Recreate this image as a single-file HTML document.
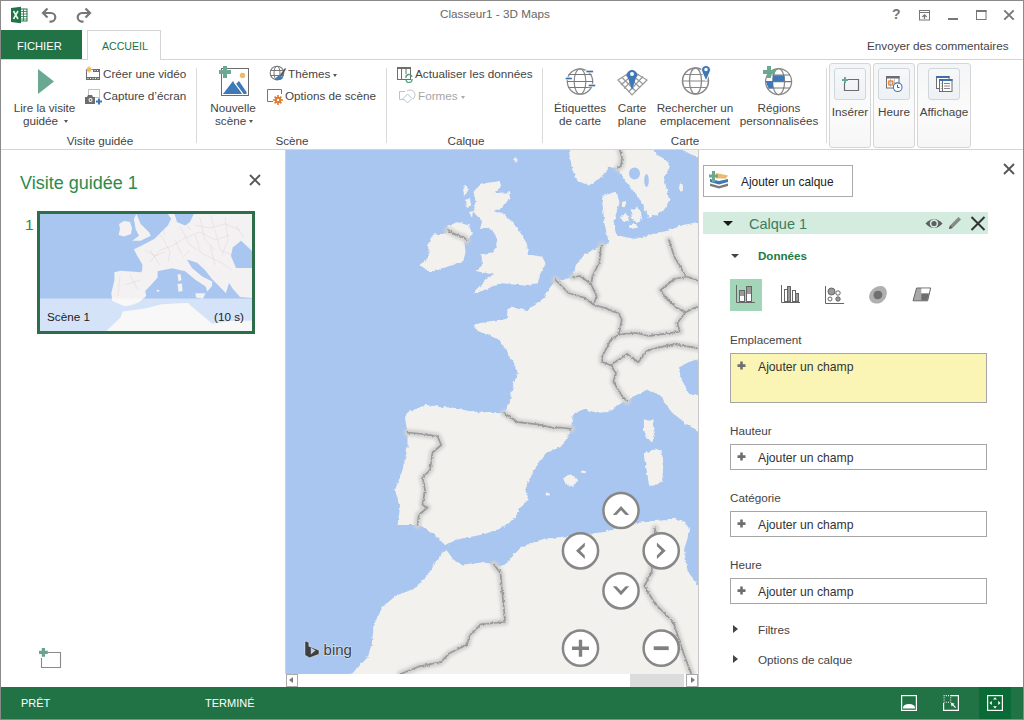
<!DOCTYPE html>
<html><head><meta charset="utf-8">
<style>
*{box-sizing:border-box;margin:0;padding:0}
html,body{width:1024px;height:720px;overflow:hidden;background:#fff}
body{font-family:"Liberation Sans",sans-serif;color:#444;position:relative}
.a{position:absolute;white-space:nowrap}
.t{font-size:11.7px;color:#444;line-height:14px}
.sep{position:absolute;width:1px;background:#dadada}
.cg{border:1px solid #d6d6d6;border-radius:3px;background:linear-gradient(#f4f5f6,#fbfbfb 60%,#f6f6f6)}
.ib{border:1px solid #cfd6dc;border-radius:3px;background:linear-gradient(#f6f8fa,#eef1f4)}
.grp{position:absolute;font-size:11.7px;color:#444;line-height:14px;text-align:center}
</style></head><body>
<!-- window border -->
<div class="a" style="left:0;top:0;width:1024px;height:720px;border:1px solid #8a8a8a;z-index:50;pointer-events:none"></div>

<!-- title bar -->
<div class="a t" style="left:440px;top:7px;color:#666">Classeur1 - 3D Maps</div>

<!-- tabs -->
<div class="a" style="left:1px;top:30px;width:81px;height:30px;background:#217346"></div>
<div class="a" style="left:17px;top:39px;font-size:11.2px;color:#fff;line-height:14px">FICHIER</div>
<div class="a" style="left:87px;top:30px;width:74px;height:30px;border:1px solid #d4d4d4;border-bottom:none;background:#fff;z-index:2"></div>
<div class="a" style="left:102px;top:39px;font-size:10.6px;color:#217346;line-height:14px;z-index:3">ACCUEIL</div>
<div class="a t" style="left:867px;top:39px;color:#444">Envoyer des commentaires</div>

<!-- ribbon -->
<div class="a" style="left:1px;top:59px;width:1022px;height:1px;background:#d4d4d4"></div>
<div class="a" style="left:1px;top:149px;width:1022px;height:1px;background:#d4d4d4"></div>

<!-- title bar icons -->
<svg class="a" style="left:10px;top:6px" width="20" height="18" viewBox="0 0 20 18">
 <path d="M1 2 L11 0.8 L11 17.2 L1 16 Z" fill="#1f7346"/>
 <rect x="10.5" y="3" width="6.5" height="12" fill="#fff" stroke="#1f7346" stroke-width="1"/>
 <path d="M11 5.5h6M11 8h6M11 10.5h6M11 13h6M13.5 3v12" stroke="#1f7346" stroke-width="0.8"/>
 <path d="M3.5 5 L8 13 M8 5 L3.5 13" stroke="#e8f3ec" stroke-width="1.6"/>
</svg>
<svg class="a" style="left:41px;top:7px" width="18" height="16" viewBox="0 0 18 16">
 <path d="M6.5 1.5 L2 6 L6.5 10.5" fill="none" stroke="#777" stroke-width="2.2"/>
 <path d="M2.5 6 H10 A4.3 4.3 0 0 1 10 14.6 H8.5" fill="none" stroke="#777" stroke-width="2.2"/>
</svg>
<svg class="a" style="left:74px;top:7px" width="18" height="16" viewBox="0 0 18 16">
 <path d="M11.5 1.5 L16 6 L11.5 10.5" fill="none" stroke="#777" stroke-width="2.2"/>
 <path d="M15.5 6 H8 A4.3 4.3 0 0 0 8 14.6 H9.5" fill="none" stroke="#777" stroke-width="2.2"/>
</svg>
<div class="a" style="left:892px;top:6px;font-size:14px;font-weight:bold;color:#777;line-height:16px">?</div>
<svg class="a" style="left:919px;top:10px" width="12" height="11" viewBox="0 0 12 11">
 <rect x="0.5" y="0.5" width="10" height="9.5" fill="none" stroke="#777"/>
 <path d="M0.5 2.5h10" stroke="#777" stroke-width="1"/>
 <path d="M5.5 9V5M3.3 7L5.5 4.8L7.7 7" fill="none" stroke="#777" stroke-width="1.2"/>
</svg>
<div class="a" style="left:948px;top:18px;width:10px;height:2px;background:#777"></div>
<svg class="a" style="left:976px;top:10px" width="11" height="10" viewBox="0 0 11 10">
 <rect x="0.5" y="0.5" width="9.5" height="9" fill="none" stroke="#777"/>
 <rect x="0" y="0" width="10.5" height="2" fill="#777"/>
</svg>
<svg class="a" style="left:1003px;top:9px" width="12" height="12" viewBox="0 0 12 12">
 <path d="M1.3 1.3L10.7 10.7M10.7 1.3L1.3 10.7" stroke="#777" stroke-width="1.9"/>
</svg>

<!-- ===== Visite guidée group ===== -->
<svg class="a" style="left:37px;top:69px" width="18" height="26" viewBox="0 0 18 26">
 <path d="M1 0 L17 12.5 L1 25 Z" fill="#6aa892"/>
</svg>
<div class="a t" style="left:13px;top:101px;width:63px;text-align:center">Lire la visite</div>
<div class="a t" style="left:23px;top:114px">guidée</div>
<div class="a" style="left:64px;top:120px;width:0;height:0;border-left:2.5px solid transparent;border-right:2.5px solid transparent;border-top:3px solid #555"></div>

<svg class="a" style="left:85px;top:66px" width="16" height="15" viewBox="0 0 16 15">
 <rect x="1.5" y="3.5" width="13" height="10" fill="#fff" stroke="#6d6d6d" stroke-width="1"/>
 <rect x="1" y="11" width="14" height="3" fill="#6d6d6d"/>
 <rect x="8" y="3" width="7" height="3" fill="#6d6d6d"/>
 <path d="M2.5 12.5h1M5 12.5h1M7.5 12.5h1M10 12.5h1M12.5 12.5h1M9.5 4.5h1M12 4.5h1" stroke="#fff" stroke-width="1"/>
 <circle cx="4" cy="3.5" r="2.2" fill="#f0b860"/>
 <path d="M4 0v7M0.5 3.5h7M1.5 1l5 5M6.5 1l-5 5" stroke="#f0b860" stroke-width="0.7"/>
</svg>
<div class="a t" style="left:103px;top:67px">Créer une vidéo</div>
<svg class="a" style="left:84px;top:89px" width="18" height="16" viewBox="0 0 18 16">
 <rect x="4.5" y="0.5" width="11" height="8" fill="none" stroke="#888" stroke-width="1" stroke-dasharray="1 1"/>
 <path d="M1 8h2l1-2h4l1 2h2v7H1z" fill="#6d6d6d"/>
 <circle cx="6.5" cy="11" r="2" fill="#fff"/><circle cx="6.5" cy="11" r="1" fill="#6d6d6d"/>
 <path d="M15 9.5v6M12 12.5h6" stroke="#3c78b5" stroke-width="2"/>
</svg>
<div class="a t" style="left:103px;top:89px">Capture d’écran</div>
<div class="a grp" style="left:40px;top:134px;width:120px">Visite guidée</div>
<div class="sep" style="left:196px;top:68px;height:75px"></div>

<!-- ===== Scène group ===== -->
<svg class="a" style="left:218px;top:65px" width="32" height="32" viewBox="0 0 32 32">
 <rect x="3.5" y="3.5" width="27" height="27" fill="#fff" stroke="#6d6d6d" stroke-width="1"/>
 <path d="M5 29 L15 16 L22 25 L24 29 Z" fill="#3e78b8"/>
 <path d="M18 19 L21 16 L28.5 27 L28.5 29 L25 29 Z" fill="#3e78b8"/>
 <path d="M16 17 L25 29" stroke="#fff" stroke-width="1.2"/>
 <circle cx="24.5" cy="10.5" r="2.7" fill="#e9bb6f"/>
 <path d="M7 1 v12 M1 7 h12" stroke="#6aa892" stroke-width="4"/>
</svg>
<div class="a t" style="left:209px;top:101px;width:48px;text-align:center">Nouvelle</div>
<div class="a t" style="left:215px;top:114px">scène</div>
<div class="a" style="left:249px;top:120px;width:0;height:0;border-left:2.5px solid transparent;border-right:2.5px solid transparent;border-top:3px solid #555"></div>

<svg class="a" style="left:269px;top:65px" width="17" height="17" viewBox="0 0 17 17">
 <circle cx="8" cy="8" r="6.8" fill="#fff" stroke="#777" stroke-width="1.1"/>
 <ellipse cx="8" cy="8" rx="3" ry="6.8" fill="none" stroke="#777" stroke-width="1"/>
 <path d="M1.5 5.5h13M1.5 10.5h13" stroke="#777" stroke-width="1"/>
 <path d="M6 15 Q8 10 12 11 L14 13 Q12 16 6 15Z" fill="#3e78b8"/>
 <path d="M11 10 L16 3 L17 4 L13 11Z" fill="#555"/>
</svg>
<div class="a t" style="left:288px;top:67px">Thèmes</div>
<div class="a" style="left:333px;top:74px;width:0;height:0;border-left:2.5px solid transparent;border-right:2.5px solid transparent;border-top:3px solid #555"></div>
<svg class="a" style="left:267px;top:89px" width="17" height="16" viewBox="0 0 17 16">
 <path d="M6 12.5H0.5V0.5H14.5V5" fill="none" stroke="#777" stroke-width="1"/>
 <circle cx="11" cy="11" r="3.2" fill="#e07a2c"/>
 <path d="M11 6v10M6 11h10M7.6 7.6l6.8 6.8M14.4 7.6l-6.8 6.8" stroke="#e07a2c" stroke-width="1.6"/>
 <circle cx="11" cy="11" r="1.2" fill="#fff"/>
</svg>
<div class="a t" style="left:285px;top:89px">Options de scène</div>
<div class="a grp" style="left:252px;top:134px;width:80px">Scène</div>
<div class="sep" style="left:386px;top:68px;height:75px"></div>

<!-- ===== Calque group ===== -->
<svg class="a" style="left:397px;top:67px" width="17" height="16" viewBox="0 0 17 16">
 <rect x="0.5" y="0.5" width="13" height="12" fill="#fff" stroke="#6d6d6d" stroke-width="1"/>
 <rect x="0" y="0" width="14" height="2" fill="#6d6d6d"/>
 <path d="M4.5 2v10M9 2v5" stroke="#6d6d6d" stroke-width="1"/>
 <path d="M9 11 A3 3 0 0 1 15 10 M15 12 A3 3 0 0 1 9 13" fill="none" stroke="#4ea27a" stroke-width="1.3"/>
</svg>
<div class="a t" style="left:415px;top:67px">Actualiser les données</div>
<svg class="a" style="left:399px;top:88px" width="17" height="16" viewBox="0 0 17 16">
 <path d="M5 11.5H0.5V3.5H6" fill="none" stroke="#b9c4cc" stroke-width="1"/>
 <path d="M8 3 A5 5 0 0 1 14 11" fill="none" stroke="#b9c4cc" stroke-width="1"/>
 <path d="M8.5 6 L13 10.5 L8.5 15 L4 10.5Z" fill="none" stroke="#b9c4cc" stroke-width="1"/>
</svg>
<div class="a t" style="left:418px;top:89px;color:#a6a6a6">Formes</div>
<div class="a" style="left:461px;top:96px;width:0;height:0;border-left:2.5px solid transparent;border-right:2.5px solid transparent;border-top:3px solid #aaa"></div>
<div class="a grp" style="left:426px;top:134px;width:80px">Calque</div>
<div class="sep" style="left:542px;top:68px;height:75px"></div>

<!-- ===== Carte group ===== -->
<svg class="a" style="left:564px;top:66px" width="34" height="30" viewBox="0 0 34 30">
 <circle cx="16" cy="15.5" r="12.7" fill="#fff" stroke="#8a8a8a" stroke-width="1.3"/>
 <ellipse cx="16" cy="15.5" rx="5.8" ry="12.7" fill="none" stroke="#8a8a8a" stroke-width="1.2"/>
 <path d="M4.5 8.5h23M3 15.5h26M4.5 21.5h23" stroke="#777" stroke-width="1.2"/>
 <rect x="1.2" y="11.2" width="7" height="2.6" fill="#3e6fa8" stroke="#fff" stroke-width="0.8"/>
 <rect x="22" y="4.2" width="7.5" height="2.6" fill="#3e6fa8" stroke="#fff" stroke-width="0.8"/>
 <rect x="24.2" y="18.2" width="7.5" height="2.6" fill="#3e6fa8" stroke="#fff" stroke-width="0.8"/>
</svg>
<div class="a t" style="left:551px;top:101px;width:58px;text-align:center">Étiquettes</div>
<div class="a t" style="left:551px;top:114px;width:58px;text-align:center">de carte</div>

<svg class="a" style="left:617px;top:66px" width="32" height="30" viewBox="0 0 32 30">
 <path d="M1 14 L15 5 L30 14 L15 29 Z" fill="#fff" stroke="#999" stroke-width="1.2"/>
 <path d="M5 11.5 L19 25.5 M9 9 L23 21.5 M12 6.8 L26 18 M26 10.5 L11.5 26 M21.5 8 L7 22.5 M18 6.5 L4 19" stroke="#999" stroke-width="1.2"/>
 <path d="M15 24 L11 12 A5 5 0 1 1 19 12 Z" fill="#3e78b8"/>
 <circle cx="15" cy="8" r="2" fill="#fff"/>
</svg>
<div class="a t" style="left:612px;top:101px;width:40px;text-align:center">Carte</div>
<div class="a t" style="left:612px;top:114px;width:40px;text-align:center">plane</div>

<svg class="a" style="left:681px;top:64px" width="32" height="32" viewBox="0 0 32 32">
 <circle cx="14.5" cy="17" r="13" fill="#fff" stroke="#888" stroke-width="1.5"/>
 <ellipse cx="14.5" cy="17" rx="6" ry="13" fill="none" stroke="#888" stroke-width="1.3"/>
 <path d="M1.5 17h26M3.5 10.5h22M3.5 23.5h22" stroke="#888" stroke-width="1.2"/>
 <path d="M25 17 L21 8 A4.5 4.5 0 1 1 29 8 Z" fill="#3e78b8" stroke="#fff" stroke-width="1"/>
 <circle cx="25" cy="5.5" r="1.7" fill="#fff"/>
</svg>
<div class="a t" style="left:654px;top:101px;width:82px;text-align:center">Rechercher un</div>
<div class="a t" style="left:654px;top:114px;width:82px;text-align:center">emplacement</div>

<svg class="a" style="left:762px;top:64px" width="34" height="32" viewBox="0 0 34 32">
 <circle cx="16.6" cy="17.6" r="13" fill="#fff" stroke="#8a8a8a" stroke-width="1.3"/>
 <ellipse cx="16.6" cy="17.6" rx="6" ry="13" fill="none" stroke="#8a8a8a" stroke-width="1.2"/>
 <path d="M5 11h23M3.6 17.6h26M5 24h23" stroke="#777" stroke-width="1.2"/>
 <path d="M11 11.3 H22.4 V17.1 H11 Z" fill="#3e78b8"/>
 <path d="M4 17 H11 V24.5 H7 Q4.5 21 4 17 Z" fill="#3e78b8"/>
 <path d="M7 2 v12 M1 8 h12" stroke="#6aa892" stroke-width="4"/>
</svg>
<div class="a t" style="left:738px;top:101px;width:82px;text-align:center">Régions</div>
<div class="a t" style="left:738px;top:114px;width:82px;text-align:center">personnalisées</div>
<div class="a grp" style="left:645px;top:134px;width:80px">Carte</div>
<div class="sep" style="left:826px;top:68px;height:75px"></div>

<!-- ===== collapsed groups ===== -->
<div class="a cg" style="left:829px;top:63px;width:42px;height:85px"></div>
<div class="a ib" style="left:834px;top:68px;width:32px;height:32px"></div>
<svg class="a" style="left:840px;top:74px" width="22" height="20" viewBox="0 0 22 20">
 <path d="M7 5.5 H18.5 V16.5 H4.5 V9" fill="none" stroke="#6d6d6d" stroke-width="1.2"/>
 <path d="M5 3v6M2 6h6" stroke="#6aa892" stroke-width="2"/>
</svg>
<div class="a t" style="left:829px;top:105px;width:42px;text-align:center">Insérer</div>

<div class="a cg" style="left:873px;top:63px;width:42px;height:85px"></div>
<div class="a ib" style="left:878px;top:68px;width:32px;height:32px"></div>
<svg class="a" style="left:884px;top:74px" width="22" height="22" viewBox="0 0 22 22">
 <rect x="2.5" y="2.5" width="12.5" height="11.5" fill="#fff" stroke="#6d6d6d"/>
 <rect x="2" y="2" width="13.5" height="2.5" fill="#6d6d6d"/>
 <path d="M6.5 4.5v9M10.5 4.5v9M2.5 9h12.5" stroke="#bbb" stroke-width="0.8"/>
 <rect x="4.8" y="7" width="4" height="4" fill="none" stroke="#e07a2c" stroke-width="1.2"/>
 <circle cx="13.7" cy="13.2" r="4.3" fill="#fff" stroke="#3e78b8" stroke-width="1.1"/>
 <path d="M13.5 10.8v2.7h2" fill="none" stroke="#555" stroke-width="1"/>
</svg>
<div class="a t" style="left:873px;top:105px;width:42px;text-align:center">Heure</div>

<div class="a cg" style="left:917px;top:63px;width:54px;height:85px"></div>
<div class="a ib" style="left:928px;top:68px;width:32px;height:32px"></div>
<svg class="a" style="left:934px;top:74px" width="22" height="22" viewBox="0 0 22 22">
 <rect x="2.5" y="2.5" width="12.5" height="12" fill="#fff" stroke="#6d6d6d"/>
 <rect x="2" y="2" width="13.5" height="2" fill="#3e6fa8"/>
 <rect x="5.5" y="5.5" width="12.5" height="12" fill="#fff" stroke="#6d6d6d"/>
 <rect x="5" y="5" width="13.5" height="2" fill="#3e6fa8"/>
 <path d="M8.5 7v10" stroke="#6d6d6d"/>
 <path d="M6.8 9.5h0.8M6.8 12h0.8M6.8 14.5h0.8" stroke="#888"/>
 <path d="M10 9.5h6M10 12h6M10 14.5h6" stroke="#888" stroke-width="1"/>
</svg>
<div class="a t" style="left:917px;top:105px;width:54px;text-align:center">Affichage</div>

<!-- status bar -->
<div class="a" style="left:1px;top:687px;width:1022px;height:32px;background:#217346"></div>
<div class="a" style="left:21px;top:696px;font-size:11px;color:#fff;line-height:14px">PRÊT</div>
<div class="a" style="left:205px;top:696px;font-size:11px;color:#fff;line-height:14px">TERMINÉ</div>
<div class="a" style="left:979px;top:687px;width:32px;height:32px;background:#0b6b37"></div>

<!-- map -->
<div class="a" style="left:285px;top:150px;width:413px;height:524px;overflow:hidden;background:#a9c6f0">
<svg width="413" height="524" viewBox="285 150 413 524" style="position:absolute;left:0;top:0">
 <defs>
  <filter id="bl" x="-5%" y="-5%" width="110%" height="110%"><feGaussianBlur stdDeviation="0.6"/></filter>
  <filter id="roughb" x="-5%" y="-5%" width="110%" height="110%"><feTurbulence type="fractalNoise" baseFrequency="0.35" numOctaves="2" seed="7" result="n"/><feDisplacementMap in="SourceGraphic" in2="n" scale="3" xChannelSelector="R" yChannelSelector="G" result="d"/><feGaussianBlur in="d" stdDeviation="0.55"/></filter>
  <filter id="rough" x="-5%" y="-5%" width="110%" height="110%"><feTurbulence type="fractalNoise" baseFrequency="0.25" numOctaves="2" seed="3" result="n"/><feDisplacementMap in="SourceGraphic" in2="n" scale="3.5" xChannelSelector="R" yChannelSelector="G" result="d"/><feGaussianBlur in="d" stdDeviation="0.6"/></filter>
  <filter id="bl2" x="-5%" y="-5%" width="110%" height="110%"><feGaussianBlur stdDeviation="1.6"/></filter>
 </defs>
 <g fill="#f2f1ee" filter="url(#rough)">
  <!-- Europe mainland -->
  <path d="M710 221 L699 222 L683 225 L669 230.6 L655.6 233.3 L634.7 238.9 L620.8 236 L616.7 236 L613.9 225 L615.3 216.7 L619.4 202.8 L616.7 191.7 L602.8 195.8 L602 199 L604.4 223.3 L608.9 243.3 L602.2 245.6 L584.4 254.4 L575.6 265.6 L573.3 276.7 L553.3 283.3 L548.9 288.9 L544.4 297.8 L531.1 306.7 L526.7 311.1 L511.1 306.7 L507.8 308.9 L506.7 318.9 L491.1 321.1 L473.3 324.4 L477.8 331.1 L497.8 338.9 L506.7 351.1 L513.3 362.2 L517.8 373.3 L513.3 384.4 L510 400 L504.4 413.3 L480 412.5 L447.5 407.5 L425 405 L407.5 412.5 L405 417.5 L407.5 432.5 L407.5 447.5 L402.5 470 L395 490 L400 507.5 L397.5 525 L420 525 L435 535 L445 545 L455 540 L480 535 L500 529 L515 518 L520 508 L529 499 L525 490 L527.5 482.5 L536 467 L547 452.5 L560 447.5 L565 441.7 L571 429 L573 414 L584 409 L598 413 L608 412 L620 404 L630 398 L647 390 L660.6 395.6 L671.7 412.2 L685.6 423.3 L710 440 L710 392 L699 395.6 L688.3 392.8 L681.4 378.9 L678.6 367.8 L688.3 362.2 L710 355 Z"/>
  <!-- Scandinavia -->
  <path d="M568 140 L568.9 150 L570 158.9 L573.3 172.2 L577.8 181.1 L588.9 185.6 L602.2 176.7 L608.3 166.7 L616.7 168 L618 168 L620.8 175 L629.2 186 L637.5 195.8 L643 205.6 L648.6 216.7 L655.6 215.3 L665.3 208.3 L669.4 200 L666.7 188.9 L663.9 177.8 L669.4 168 L668 161 L658.3 155.6 L652.8 150 L653 140 Z"/>
  <path d="M683 150 L683 140 L710 140 L710 158 L699 157 L692 155 Z"/>
  <ellipse cx="681" cy="187.5" rx="2" ry="4"/>
  <!-- Danish islands -->
  <path d="M631 210 L637 207 L641 212 L642 219 L637 223 L632 220 Z"/>
  <path d="M621 216 L627 214 L629 220 L623 223 Z"/>
  <path d="M628 224 L636 224 L638 228 L630 229 Z"/>
  <path d="M622 203 L626 202 L626 207 L622 207 Z"/>
  <!-- Great Britain -->
  <path d="M477.8 186.7 L484.4 183.3 L500 181.1 L501.1 186.7 L493.3 193.3 L508.9 192.2 L510 197.8 L502.2 207.8 L493.3 211.1 L504.4 214.4 L513.3 223.3 L520 232.2 L526.7 243.3 L528.9 254.4 L542.2 256.7 L545.6 263.3 L540 274.4 L537.8 283.3 L524.4 285.6 L502.2 283.3 L488.9 287.8 L473.3 294.4 L475.6 290 L486.7 278.9 L493.3 274.4 L475.6 271.1 L482.2 265.6 L480 254.4 L493.3 252.2 L496.7 247.8 L495.6 234.4 L488.9 227.8 L480 228.9 L482.2 221.1 L473.3 212.2 L475.6 201.1 L473.3 192.2 Z"/>
  <!-- small islands -->
  <path d="M463 188 L467 185 L468 191 L464 196 Z"/>
  <path d="M466 200 L470 198 L471 206 L467 208 Z"/>
  <path d="M469 212 L473 211 L472 218 Z"/>
  <ellipse cx="516" cy="160" rx="1.5" ry="2.5"/>
  <!-- Ireland -->
  <path d="M447.8 225.6 L457.8 222.2 L468.9 225.6 L472.2 234.4 L464.4 241.1 L465.6 252.2 L463.3 261.1 L444.4 267.8 L431.1 272.2 L420 265.6 L428.9 256.7 L427.8 243.3 L433.3 234.4 L446.7 233.3 Z"/>
  <!-- Corsica / Sardinia / Balearics -->
  <path d="M643.9 420.6 L653.6 420.6 L655 434.4 L652.2 442.8 L646.7 437.2 L644 430 Z"/>
  <path d="M643.9 453.9 L655 448.3 L660.6 451.1 L663.3 467.8 L662 481.7 L649.4 487.2 L646.7 470.6 L644.5 460 Z"/>
  <path d="M563 478 L570 474 L577.6 479 L574 486.8 L566 485 Z"/>
  <ellipse cx="583.5" cy="472" rx="2.5" ry="1.5"/>
  <ellipse cx="547.5" cy="494" rx="2" ry="1.5"/>
  <!-- North Africa -->
  <path d="M340 690 L351.7 674 L367.2 657.8 L371.7 644.4 L373.9 624.4 L382.8 606.7 L396.1 595.6 L413.9 588.9 L427.2 575.6 L436.1 562.2 L445 550 L447.2 551.1 L453.9 560 L462.8 564.4 L485 562.2 L498.3 566.7 L505 564.4 L521.7 546.4 L543.3 539.1 L572.2 535.5 L604.7 531.9 L626.4 524.7 L651.6 521 L663.3 520.5 L674.4 517.8 L685.6 523.3 L690 530 L684 550 L687.7 571.6 L699 586 L710 600 L710 690 L340 690 Z"/>
 </g>
 <!-- Sweden lakes -->
 <g fill="#a9c6f0" filter="url(#bl)">
  <ellipse cx="634.5" cy="173.5" rx="5.5" ry="6"/>
  <ellipse cx="646.5" cy="180.5" rx="2.3" ry="6.5"/>
 </g>
 <!-- borders -->
 <g fill="none" stroke-linejoin="round" stroke-linecap="round">
  <g stroke="#d2d2d0" stroke-width="7" filter="url(#bl2)">
   <path id="b1" d="M620 150 L622 158 L621 166 L618 168"/>
   <path d="M447.8 230 L455.6 234.4 L464.4 237.8 L466.7 240"/>
   <path d="M602 245.6 L600.8 248.3 L599.4 262.2 L592.5 276.1 L591.1 284.4 L596.7 295.6 L593.9 303.9"/>
   <path d="M573 277 L580 276 L591 284"/>
   <path d="M555.6 280 L568.9 293.3 L584.4 297.8 L593.9 305 L605 308 L618.9 313.6 L621.7 320 L618.9 334.4 L610.6 340 L602.2 356.7 L602.2 362 L610.6 365 L616 373.3 L613.3 381.7 L621.7 395.6 L627 401"/>
   <path d="M618.9 334.4 L635.6 333 L649.4 335.8 L660.6 334.4 L680 331.7 L677.2 323.3 L685.6 312.2 L696.7 306.7"/>
   <path d="M610.6 365 L627.2 353.9 L638.3 362.2 L646.7 351.1 L655 348.3 L674.4 344.2 L699 348.3"/>
   <path d="M668.9 240 L674.4 256.7 L685.6 276.1 L699 281"/>
   <path d="M660.6 290 L674.4 278.9 L685.6 277"/>
   <path d="M660.6 290 L666 298 L677 308 L685.6 312.2"/>
   <path d="M504.4 413.3 L517.8 422.2 L537.8 424.4 L553.3 427.8 L560 427.5 L571.1 428.9"/>
   <path d="M407.5 432.5 L420 433.75 L437.5 436.25 L441.25 445 L432.5 452.5 L430 470 L422.5 477.5 L425 490 L422.5 505 L427.5 507.5 L418.75 515 L417.5 525"/>
   <path d="M493.9 564.4 L500.6 573.3 L501.7 586.7 L503.9 608.9 L505 622 L480.6 624.4 L469.4 635.6 L467.2 644.4 L449.4 653.3 L440.6 662.2 L418.3 666.7 L400.6 674"/>
   <path d="M655.2 528.3 L651.6 571.6 L644.4 586 L655.2 604 L673.3 622 L684 654.6 L691.3 674"/>
  </g>
  <g stroke="#9a9a9a" stroke-width="1.7" filter="url(#roughb)">
   <path d="M620 150 L622 158 L621 166 L618 168"/>
   <path d="M447.8 230 L455.6 234.4 L464.4 237.8 L466.7 240"/>
   <path d="M602 245.6 L600.8 248.3 L599.4 262.2 L592.5 276.1 L591.1 284.4 L596.7 295.6 L593.9 303.9"/>
   <path d="M573 277 L580 276 L591 284"/>
   <path d="M555.6 280 L568.9 293.3 L584.4 297.8 L593.9 305 L605 308 L618.9 313.6 L621.7 320 L618.9 334.4 L610.6 340 L602.2 356.7 L602.2 362 L610.6 365 L616 373.3 L613.3 381.7 L621.7 395.6 L627 401"/>
   <path d="M618.9 334.4 L635.6 333 L649.4 335.8 L660.6 334.4 L680 331.7 L677.2 323.3 L685.6 312.2 L696.7 306.7"/>
   <path d="M610.6 365 L627.2 353.9 L638.3 362.2 L646.7 351.1 L655 348.3 L674.4 344.2 L699 348.3"/>
   <path d="M668.9 240 L674.4 256.7 L685.6 276.1 L699 281"/>
   <path d="M660.6 290 L674.4 278.9 L685.6 277"/>
   <path d="M660.6 290 L666 298 L677 308 L685.6 312.2"/>
   <path d="M504.4 413.3 L517.8 422.2 L537.8 424.4 L553.3 427.8 L560 427.5 L571.1 428.9"/>
   <path d="M407.5 432.5 L420 433.75 L437.5 436.25 L441.25 445 L432.5 452.5 L430 470 L422.5 477.5 L425 490 L422.5 505 L427.5 507.5 L418.75 515 L417.5 525"/>
   <path d="M493.9 564.4 L500.6 573.3 L501.7 586.7 L503.9 608.9 L505 622 L480.6 624.4 L469.4 635.6 L467.2 644.4 L449.4 653.3 L440.6 662.2 L418.3 666.7 L400.6 674"/>
   <path d="M655.2 528.3 L651.6 571.6 L644.4 586 L655.2 604 L673.3 622 L684 654.6 L691.3 674"/>
  </g>
 </g>
 <!-- nav controls -->
 <g fill="#fff" stroke="#878787" stroke-width="2.5">
  <circle cx="621" cy="510.5" r="17.6"/>
  <circle cx="580.5" cy="550.8" r="17.6"/>
  <circle cx="661.2" cy="550.8" r="17.6"/>
  <circle cx="621" cy="590.8" r="17.6"/>
  <circle cx="580.5" cy="648.2" r="17.6"/>
  <circle cx="661.2" cy="648.2" r="17.6"/>
 </g>
 <g fill="#808080">
  <path d="M612.8 515 L621 506 L629.2 515 L625.6 515 L621 510.2 L616.4 515 Z"/>
  <path d="M584.8 542.6 L576 550.8 L584.8 559 L584.8 555.4 L580.2 550.8 L584.8 546.2 Z"/>
  <path d="M656.9 542.6 L665.7 550.8 L656.9 559 L656.9 555.4 L661.5 550.8 L656.9 546.2 Z"/>
  <path d="M612.8 586.3 L621 595.3 L629.2 586.3 L625.6 586.3 L621 591.1 L616.4 586.3 Z"/>
  <path d="M572 646.5 H578.8 V639.7 H582.2 V646.5 H589 V649.9 H582.2 V656.7 H578.8 V649.9 H572 Z"/>
  <path d="M653.7 646.3 H668.7 V650.1 H653.7 Z"/>
 </g>
<!-- bing -->
 <path d="M305 641 L308.8 642.3 L308.8 646.2 L319 650.2 L319 654.2 L309.5 657.8 L305 655.3 Z" fill="#3f3f3f" stroke="#fff" stroke-opacity="0.5" stroke-width="0.8"/>
 <path d="M310.8 647.5 L315.5 650.5 L310.8 654.5 Z" fill="#c9cde0"/>
 <text x="323.6" y="654.8" font-family="Liberation Sans" font-size="15" fill="#3f3f3f" stroke="#fff" stroke-opacity="0.45" stroke-width="1.4" paint-order="stroke">bing</text>
</svg>
</div>
<!-- map scrollbar -->
<div class="a" style="left:285px;top:150px;width:1px;height:537px;background:#cfd3d8"></div>
<div class="a" style="left:285px;top:674px;width:413px;height:13px;background:#fff"></div>
<div class="a" style="left:286px;top:674px;width:12px;height:13px;border:1px solid #ababab;background:#fff"></div>
<div class="a" style="left:289px;top:677px;width:0;height:0;border-top:3.5px solid transparent;border-bottom:3.5px solid transparent;border-right:4px solid #7a7a7a"></div>
<div class="a" style="left:630px;top:674px;width:54px;height:13px;background:#dcdcdc"></div>
<div class="a" style="left:686px;top:674px;width:12px;height:13px;border:1px solid #ababab;background:#fff"></div>
<div class="a" style="left:691px;top:677px;width:0;height:0;border-top:3.5px solid transparent;border-bottom:3.5px solid transparent;border-left:4px solid #7a7a7a"></div>
<div class="a" style="left:698px;top:150px;width:1px;height:537px;background:#c8c8c8"></div>

<!-- ===== left panel ===== -->
<div class="a" style="left:20px;top:173px;font-size:18px;color:#2a8b4c;line-height:20px">Visite guidée 1</div>
<svg class="a" style="left:249px;top:174px" width="12" height="12" viewBox="0 0 12 12"><path d="M1 1L11 11M11 1L1 11" stroke="#555" stroke-width="1.8"/></svg>
<div class="a" style="left:25px;top:217px;font-size:15.5px;color:#2a8b4c;line-height:16px">1</div>
<div class="a" style="left:37px;top:211px;width:218px;height:123px;border:3px solid #2c6e49;overflow:hidden;background:#a9c6f0">
<svg width="212" height="117" viewBox="40 214 212 117" style="position:absolute;left:0;top:0">
 <defs><filter id="tb"><feGaussianBlur stdDeviation="0.35"/></filter></defs>
 <g fill="#f3f1f1" filter="url(#tb)">
  <path d="M136.4 214 L140.7 223.9 L149.1 232.3 L150.8 235.7 L140.7 240.8 L132.2 240.8 L139 235.7 L135.6 229 L133.9 218.8 Z"/>
  <path d="M119 224 L124 221 L130 222 L132 228 L131 234 L124 236.5 L118.6 235 L120 229 Z"/>
  <path d="M150.8 240.8 L154.2 239.1 L162.7 230.6 L167.8 225.6 L171.2 218.8 L167.8 214 L174.5 214 L177 222 L185 225.5 L190 222 L193.7 214 L252 214 L252 251 L241.1 240.8 L232.7 247.6 L231 256 L236 267.9 L252 267.9 L252 298 L240 297 L233 289 L229 283 L225.9 293.3 L218 285 L212 279 L205 270 L197.1 262.8 L186.9 259.4 L192 267.9 L202.2 276.4 L212.3 281.4 L212 286 L207.3 291.6 L205.6 286.5 L195.4 279.7 L185.2 271.3 L172 268.2 L157.6 271.3 L157.6 277.5 L149.4 286.7 L145.2 290.8 L146.3 296 L139 302.2 L130.8 305.2 L124.7 306.3 L112.3 301.1 L111.3 292.9 L114.4 280.6 L114.4 272.3 L120.6 270.8 L141.1 272.3 L142.2 270.3 L142.4 264.5 L137.3 256 L133.9 249.3 L140.7 245.9 Z"/>
  <path d="M177.5 274.5 L180.5 274 L181.5 280 L178.5 281.5 Z"/>
  <path d="M177.5 284 L182 283.5 L182.5 291 L178.5 292 Z"/>
  <path d="M195.4 293.3 L205.6 293.3 L203 298.4 L196 297.5 Z"/>
  <ellipse cx="158" cy="290.8" rx="1.5" ry="1"/>
  <path d="M106.2 331 L120.6 317.6 L122.6 311.4 L130.8 310.4 L146.3 308.3 L161.7 304.2 L180 303.2 L188 303 L192 306.8 L212.3 323.8 L230 321 L252 320.4 L252 331 Z"/>
 </g>
 <g fill="none" stroke="#cdb9c9" stroke-width="0.45" opacity="0.55">
  <path d="M158 232 L164 240 L170 252 L168 262 M150 262 L160 250 L172 246 L185 238 L200 232 L215 240 L230 235 M180 226 L190 245 L205 255 L220 262 L232 270 M120 276 L118 296 M130 275 L138 290 M125 285 L140 280 M195 225 L210 228 L225 224 L240 230 M200 218 L205 240 L215 250 M225 218 L228 240 L222 255 M175 240 L182 255 M160 265 L150 250 M200 250 L195 235 M210 245 L215 265 M145 250 L155 256 L165 252 M215 230 L220 250 L240 258 M236 226 L244 238 M190 230 L180 214 M160 220 L165 235 M211 215 L214 228 M183 257 L190 250 M195 270 L190 262"/>
 </g>
 <rect x="40" y="298.5" width="212" height="33" fill="#fff" opacity="0.5"/>
</svg>
</div>
<div class="a" style="left:47px;top:310px;font-size:11.7px;color:#222;line-height:14px">Scène 1</div>
<div class="a" style="left:214px;top:310px;font-size:11.7px;color:#222;line-height:14px">(10 s)</div>
<svg class="a" style="left:38px;top:648px" width="24" height="22" viewBox="0 0 24 22">
 <path d="M9.5 4.5 H22.5 V19.5 H3.5 V10" fill="none" stroke="#8a8a8a" stroke-width="1.1"/>
 <path d="M5.4 0 v8.8 M1 4.4 h8.8" stroke="#6aa38f" stroke-width="3.3"/>
</svg>

<!-- ===== right panel ===== -->
<svg class="a" style="left:1003px;top:163px" width="12" height="12" viewBox="0 0 12 12"><path d="M1 1L11 11M11 1L1 11" stroke="#555" stroke-width="1.8"/></svg>
<div class="a" style="left:703px;top:165px;width:150px;height:32px;border:1px solid #ababab;background:#fff"></div>
<svg class="a" style="left:708px;top:170px" width="22" height="20" viewBox="0 0 22 20">
 <path d="M8 3 L20 5.5 L18 8.5 L8 8.5 Z" fill="#e9bb6f"/>
 <path d="M2 9 L11 11 L20 9 L20 12 L11 14.5 L2 12 Z" fill="#3e78b8"/>
 <path d="M2 13.5 L11 16 L20 13.5 L20 16 L11 18.5 L2 16 Z" fill="#7a7a7a"/>
 <path d="M5.5 1v11M1 6h9" stroke="#6aa892" stroke-width="3"/>
</svg>
<div class="a" style="left:741px;top:175px;font-size:11.9px;color:#222;line-height:14px">Ajouter un calque</div>

<div class="a" style="left:703px;top:212px;width:285px;height:22px;background:#d3ecdf"></div>
<div class="a" style="left:723px;top:221px;width:0;height:0;border-left:5px solid transparent;border-right:5px solid transparent;border-top:5px solid #1a1a1a"></div>
<div class="a" style="left:749px;top:216px;font-size:14.5px;color:#3d7c5d;line-height:17px">Calque 1</div>
<svg class="a" style="left:925px;top:216px" width="18" height="15" viewBox="0 0 18 15">
 <path d="M0.5 7.5 Q9 -1.5 17.5 7.5 Q9 16.5 0.5 7.5Z" fill="#5e5e5e"/>
 <circle cx="9" cy="7.5" r="4.2" fill="#d3ecdf"/>
 <circle cx="9" cy="7.5" r="2.6" fill="#5e5e5e"/>
</svg>
<svg class="a" style="left:947px;top:215px" width="16" height="16" viewBox="0 0 16 16">
 <path d="M2 14 L3 10.5 L11.5 2 L14 4.5 L5.5 13 Z" fill="#888"/>
 <path d="M2 14 L3 10.5 L5.5 13 Z" fill="#555"/>
</svg>
<svg class="a" style="left:970px;top:216px" width="16" height="15" viewBox="0 0 16 15"><path d="M1.5 1L14.5 14M14.5 1L1.5 14" stroke="#333" stroke-width="2"/></svg>

<div class="a" style="left:731px;top:254px;width:0;height:0;border-left:4px solid transparent;border-right:4px solid transparent;border-top:4px solid #444"></div>
<div class="a" style="left:758px;top:249px;font-size:11.6px;font-weight:bold;color:#1e7a46;line-height:14px">Données</div>

<div class="a" style="left:730px;top:279px;width:32px;height:32px;background:#a3d5b8"></div>
<svg class="a" style="left:735px;top:285px" width="22" height="20" viewBox="0 0 22 20">
 <path d="M1.5 0 V17.5 H20" fill="none" stroke="#666" stroke-width="1"/>
 <rect x="4.5" y="5.5" width="5" height="11" fill="#fff" stroke="#666"/>
 <rect x="5" y="6" width="4" height="5" fill="#999"/>
 <rect x="11.5" y="1.5" width="5" height="15" fill="#fff" stroke="#666"/>
 <rect x="12" y="2" width="4" height="7" fill="#999"/>
</svg>
<svg class="a" style="left:780px;top:285px" width="22" height="20" viewBox="0 0 22 20">
 <path d="M1.5 0 V17.5 H20" fill="none" stroke="#666" stroke-width="1"/>
 <rect x="4.5" y="4.5" width="3" height="12" fill="#fff" stroke="#666"/>
 <rect x="7.5" y="1.5" width="3" height="15" fill="#999" stroke="#666"/>
 <rect x="12.5" y="5.5" width="3" height="11" fill="#fff" stroke="#666"/>
 <rect x="15.5" y="8.5" width="3" height="8" fill="#999" stroke="#666"/>
</svg>
<svg class="a" style="left:824px;top:286px" width="22" height="20" viewBox="0 0 22 20">
 <path d="M1.5 0 V17.5 H20" fill="none" stroke="#666" stroke-width="1"/>
 <circle cx="7.5" cy="5.5" r="3.5" fill="#999" stroke="#666"/>
 <circle cx="14" cy="7" r="2.2" fill="#fff" stroke="#666"/>
 <circle cx="6" cy="13" r="2" fill="#fff" stroke="#666"/>
 <circle cx="14" cy="13" r="2.2" fill="#999" stroke="#666"/>
</svg>
<svg class="a" style="left:868px;top:285px" width="22" height="20" viewBox="0 0 22 20">
 <path d="M1.5 14 Q0 9 4.5 4.5 Q8.5 0.5 13.5 1 Q19 2 18.8 8.5 Q18.2 15.5 11.5 18.2 Q4 20 1.5 14 Z" fill="#b0b0b0"/>
 <path d="M5.6 10.5 Q5.5 6 10 5.8 Q14.5 6 14.3 10 Q14 14 10 14.2 Q5.8 14.3 5.6 10.5Z" fill="#707070"/>
</svg>
<svg class="a" style="left:912px;top:287px" width="22" height="16" viewBox="0 0 22 16">
 <path d="M4.6 1 H18.7 L15.6 13.8 H1 Z" fill="#a8a8a8" stroke="#6a6a6a" stroke-width="1"/>
 <path d="M9.3 1.6 H17.9 L16.8 6.4 H9.3 Z" fill="#fff"/>
 <path d="M9.3 6.4 H16.8 L15.2 13.3 H9.3 Z" fill="#6e6e6e"/>
</svg>

<div class="a t" style="left:730px;top:333px;color:#444">Emplacement</div>
<div class="a" style="left:730px;top:353px;width:257px;height:50px;border:1px solid #a6a6a6;background:#fbf5b5"></div>
<svg class="a" style="left:737px;top:361px" width="9" height="9" viewBox="0 0 9 9"><path d="M0.5 3.3h8v2.6h-8z M3.2 0.5h2.6v8h-2.6z" fill="#6e6e6e"/></svg>
<div class="a t" style="left:758px;top:360px;color:#333;font-size:12.2px">Ajouter un champ</div>

<div class="a t" style="left:730px;top:424px;color:#444">Hauteur</div>
<div class="a" style="left:730px;top:444px;width:257px;height:26px;border:1px solid #a6a6a6;background:#fff"></div>
<svg class="a" style="left:737px;top:452px" width="9" height="9" viewBox="0 0 9 9"><path d="M0.5 3.3h8v2.6h-8z M3.2 0.5h2.6v8h-2.6z" fill="#6e6e6e"/></svg>
<div class="a t" style="left:758px;top:451px;color:#333;font-size:12.2px">Ajouter un champ</div>

<div class="a t" style="left:730px;top:491px;color:#444">Catégorie</div>
<div class="a" style="left:730px;top:511px;width:257px;height:26px;border:1px solid #a6a6a6;background:#fff"></div>
<svg class="a" style="left:737px;top:519px" width="9" height="9" viewBox="0 0 9 9"><path d="M0.5 3.3h8v2.6h-8z M3.2 0.5h2.6v8h-2.6z" fill="#6e6e6e"/></svg>
<div class="a t" style="left:758px;top:518px;color:#333;font-size:12.2px">Ajouter un champ</div>

<div class="a t" style="left:730px;top:558px;color:#444">Heure</div>
<div class="a" style="left:730px;top:578px;width:257px;height:26px;border:1px solid #a6a6a6;background:#fff"></div>
<svg class="a" style="left:737px;top:586px" width="9" height="9" viewBox="0 0 9 9"><path d="M0.5 3.3h8v2.6h-8z M3.2 0.5h2.6v8h-2.6z" fill="#6e6e6e"/></svg>
<div class="a t" style="left:758px;top:585px;color:#333;font-size:12.2px">Ajouter un champ</div>

<div class="a" style="left:733px;top:625px;width:0;height:0;border-top:4.5px solid transparent;border-bottom:4.5px solid transparent;border-left:5px solid #444"></div>
<div class="a t" style="left:758px;top:623px;color:#444">Filtres</div>
<div class="a" style="left:733px;top:655px;width:0;height:0;border-top:4.5px solid transparent;border-bottom:4.5px solid transparent;border-left:5px solid #444"></div>
<div class="a t" style="left:758px;top:653px;color:#444">Options de calque</div>

<!-- status bar icons -->
<svg class="a" style="left:900px;top:694px" width="18" height="18" viewBox="0 0 18 18">
 <rect x="1.6" y="1.6" width="14.8" height="14.8" fill="none" stroke="#fff" stroke-width="1.2"/>
 <path d="M3 14.5 V13.5 Q3.5 10 9 10 Q14.5 10 15 13.5 V14.5Z" fill="#fff"/>
</svg>
<svg class="a" style="left:942px;top:694px" width="18" height="18" viewBox="0 0 18 18">
 <path d="M9 1.6 H16.4 V16.4 H1.6 V9" fill="none" stroke="#fff" stroke-width="1.2"/>
 <path d="M1.6 1.6h1M3.8 1.6h1M6 1.6h1M8.2 1.6h1M1.6 3.8h1M1.6 6h1M1.6 8.2h1M8.2 3.8h1M8.2 6h1M8.2 8.2h1M3.8 8.2h1M6 8.2h1" stroke="#fff" stroke-width="1.1"/>
 <path d="M13.6 13.6 L9.5 9.5" stroke="#fff" stroke-width="1.2"/>
 <path d="M9 9 L12.5 9.6 L9.6 12.5Z" fill="#fff"/>
</svg>
<svg class="a" style="left:986px;top:694px" width="18" height="18" viewBox="0 0 18 18">
 <rect x="1.6" y="1.6" width="14.8" height="14.8" fill="none" stroke="#fff" stroke-width="1.2"/>
 <path d="M9 3.2 L11 5.6 H7Z M9 14.6 L11 12.2 H7Z M3.4 8.9 L5.8 6.9 V10.9Z M14.6 8.9 L12.2 6.9 V10.9Z" fill="#fff"/>
</svg>

</body></html>
